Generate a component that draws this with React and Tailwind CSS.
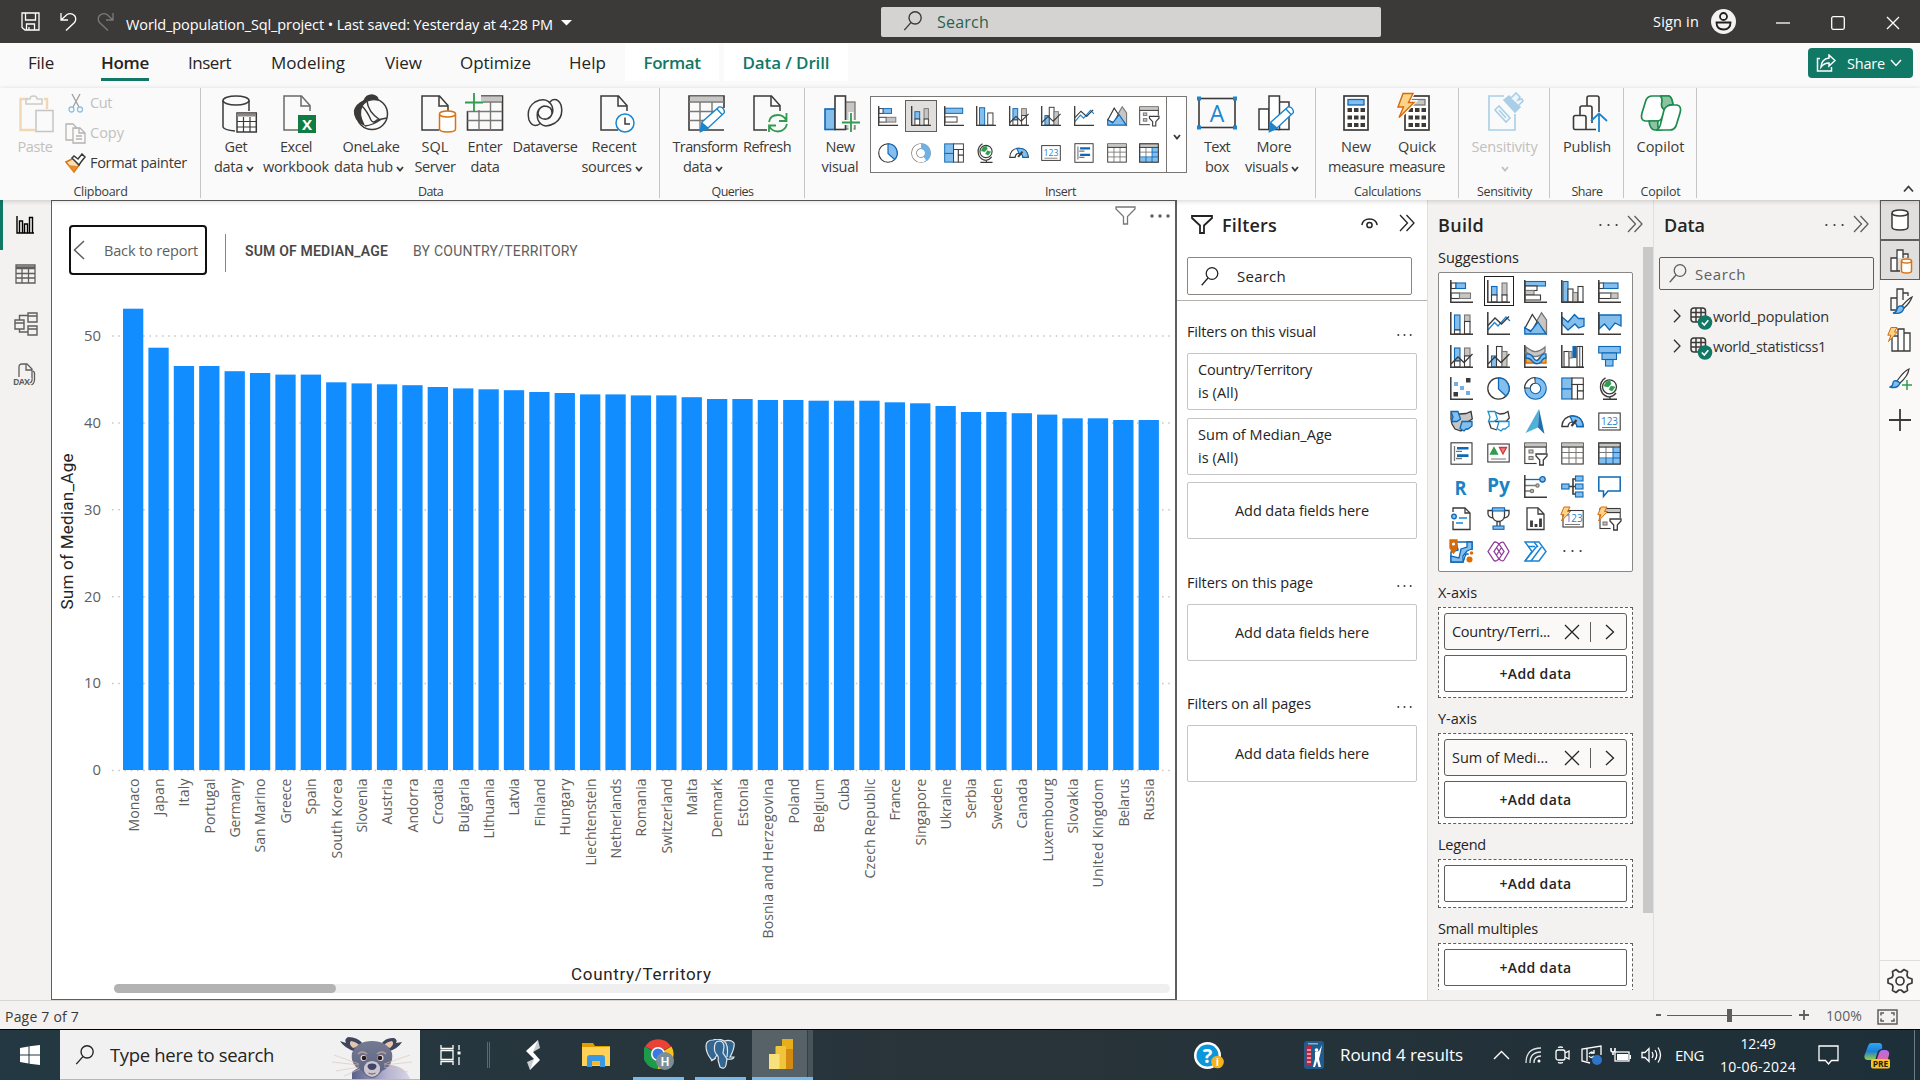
import React, { useLayoutEffect, useRef, useState } from "react";

const DARK = "#3b3a39";
const BLUE = "#83beec";
const BLUE_LINE = "#0f68b5";
const GRAY = "#c8c6c4";
const GRAY_LINE = "#797775";

/* Text run whose letter spacing is adjusted to fill a given width. */
function T({ w, className = "", children }) {
  const ref = useRef(null);
  const [spacing, setSpacing] = useState(null);
  useLayoutEffect(() => {
    const natural = ref.current.getBoundingClientRect().width;
    setSpacing((w - natural) / String(children).length);
  }, []);
  return (
    <span
      ref={ref}
      className={"inline-block shrink-0 whitespace-nowrap " + className}
      style={spacing === null ? undefined : { letterSpacing: spacing + "px" }}
    >
      {children}
    </span>
  );
}

function Svg({ w, h, vb, className = "", children, ...rest }) {
  return (
    <svg
      width={w}
      height={h}
      viewBox={vb || `0 0 ${w} ${h}`}
      fill="none"
      stroke="currentColor"
      strokeWidth="1.3"
      className={"block shrink-0 " + className}
      {...rest}
    >
      {children}
    </svg>
  );
}

const R = ({ b, f, s, sw = 1.1 }) => (
  <rect x={b[0]} y={b[1]} width={b[2] - b[0]} height={b[3] - b[1]} fill={f} stroke={s} strokeWidth={sw} />
);
const Bl = (...b) => <R b={b} f={BLUE} s={BLUE_LINE} />;
const Gr = (...b) => <R b={b} f={GRAY} s={GRAY_LINE} />;
const Wh = (...b) => <R b={b} f="#fff" s={DARK} />;
const Axis = () => <path d="M.8 0V22.2H23" stroke={DARK} strokeWidth="1.5" />;
const Bolt = ({ x = 0, y = 0, k = 1 }) => (
  <path transform={`translate(${x} ${y}) scale(${k})`} d="M4 .5H10L7.5 5H10.5L1.5 14.5L4 8.2H.8Z" fill="#fbd48a" stroke="#d66a0b" strokeWidth="1" />
);
const Funnel = () => <path d="M12 12H23V14L19.3 18V23H15.7V18L12 14Z" fill="#fff" stroke={DARK} strokeWidth="1.3" />;
const Digits = ({ x = 11.5, y = 15, size = 10.5 }) => (
  <text x={x} y={y} textAnchor="middle" fontSize={size} fill="#1a86d0" stroke="none" fontFamily="Open Sans, sans-serif" textLength="17" lengthAdjust="spacingAndGlyphs">123</text>
);

const V = {
  stackedBar: <>{Wh(1, 3, 6, 8.5)}{Bl(6, 3, 15.5, 8.5)}{Wh(1, 13, 9.5, 18.5)}{Gr(9.5, 13, 20.5, 18.5)}<Axis /></>,
  stackedCol: <>{Bl(4.5, 6.5, 10, 15)}{Wh(4.5, 15, 10, 22)}{Gr(15, 3, 20, 15)}{Wh(15, 15, 20, 22)}<Axis /></>,
  bar: <>{Bl(1, 1.5, 21.5, 6)}{Wh(1, 6, 13, 10.5)}{Gr(1, 10.5, 10, 15)}{Wh(1, 15, 16.5, 20)}<Axis /></>,
  barShort: <>{Bl(1, 2.5, 21.5, 8.5)}{Wh(1, 12.5, 15, 18.5)}<Axis /></>,
  col: <>{Bl(2, 1.5, 7, 22)}{Wh(7, 9, 12, 22)}{Gr(12, 12.5, 17, 22)}{Wh(17, 6.5, 22, 22)}<Axis /></>,
  colShort: <>{Bl(4, 2, 10, 22)}{Wh(13.5, 8, 19.5, 22)}<Axis /></>,
  bar100: <>{Wh(1, 3, 5.5, 8.5)}{Bl(5.5, 3, 20, 8.5)}{Wh(1, 13, 13, 18.5)}{Gr(13, 13, 20, 18.5)}<Axis /></>,
  col100: <>{Bl(4.5, 3, 10, 18)}{Wh(4.5, 18, 10, 22)}{Gr(14.5, 3, 20, 9.5)}{Wh(14.5, 9.5, 20, 22)}<Axis /></>,
  line: <><path d="M1 18L7.5 10.5L11 14L19 5L23 9" stroke="#1a86d0" /><path d="M1 13.5L8 6L14.5 12L22 4.5" stroke={DARK} /><Axis /></>,
  area: <><path d="M17.5 .8L12.5 9.5L22.5 22V8Z" fill={GRAY} stroke={GRAY_LINE} /><path d="M.8 16.5L8.3 2.5L13 9.5L8 19Z" fill="#fff" stroke={DARK} /><path d="M.8 15.5L6.5 19.5L14 10L22 22H.8Z" fill={BLUE} stroke={BLUE_LINE} /></>,
  stackedArea: <><path d="M1 5L7 10L13.5 2.5L17.5 6.5H23V14L17.5 16L14 12L7 18L1 12Z" fill={BLUE} stroke={BLUE_LINE} /><Axis /></>,
  area100: <><path d="M1 3H23V14L17 11L11.5 18L6.5 12L1 17Z" fill={BLUE} stroke={BLUE_LINE} /><Axis /></>,
  combo1: <>{Bl(4.5, 3, 10, 16)}{Wh(4.5, 16, 10, 22)}{Gr(14.5, 3, 20, 11)}{Wh(14.5, 11, 20, 22)}<path d="M1 19L8 12L14 17.5L22.5 9" stroke={DARK} /><Axis /></>,
  combo2: <>{Bl(4.5, 11, 10, 22)}{Wh(9.5, 1.5, 15, 22)}{Gr(15, 6.5, 20, 22)}<path d="M1 19L8 12L14 17.5L22.5 9" stroke={DARK} /><Axis /></>,
  ribbon: <><path d="M2 12H8Q11 16 13 16L16 12H22V18H2Z" fill="#f6a44a" stroke="#d66a0b" /><path d="M2 2L5 4Q12 10 21 2V7Q12 15 5 9L2 7Z" fill={GRAY} stroke={GRAY_LINE} /><path d="M2 9Q7 8 9.5 13T16 13Q18 8 22 9V13Q19 13 17 17Q12 21 8 16Q6 13 2 13Z" fill={BLUE} stroke={BLUE_LINE} /><Axis /></>,
  waterfall: <>{Wh(3, 6.5, 8, 22)}{Gr(8, 6.5, 11, 13)}<R b={[12, 1.5, 15, 12.5]} f={BLUE_LINE} s={BLUE_LINE} />{Wh(16, 1.5, 21.5, 22)}<path d="M18.7 2V22" stroke={GRAY_LINE} /><Axis /></>,
  funnel: <>{Bl(.7, 1.5, 22.3, 8)}{Bl(4, 8, 18.5, 14.5)}{Bl(7.5, 14.5, 15, 21)}</>,
  scatter: <><g stroke="none"><path d="M16 1H20.5V5.5H16ZM3.5 15H8V19.5H3.5Z" fill={DARK} /><path d="M4 5H8V9H4ZM10 9H14V13H10ZM16 14H20V18H16Z" fill="#6fb1e4" /></g><Axis /></>,
  pie: <><circle cx="11.5" cy="11.5" r="10.7" fill="#fff" stroke={DARK} /><path d="M11.5 .8A10.7 10.7 0 0 1 19 19L11.5 12Z" fill={BLUE} stroke={BLUE_LINE} /></>,
  donut: <><circle cx="11.5" cy="11.5" r="8" stroke={BLUE_LINE} strokeWidth="6.6" /><circle cx="11.5" cy="11.5" r="8" stroke={BLUE} strokeWidth="4.6" /><path d="M3.2 11.5A8.3 8.3 0 0 1 11.5 3.2" stroke={DARK} strokeWidth="6.6" /><path d="M3.4 10.5A8.3 8.3 0 0 1 10.5 3.4" stroke="#fff" strokeWidth="4.6" /></>,
  donutLight: <><circle cx="11.5" cy="11.5" r="8" stroke={GRAY_LINE} strokeWidth="6.6" /><circle cx="11.5" cy="11.5" r="8" stroke="#fff" strokeWidth="5" /><path d="M11.5 3.5A8 8 0 0 1 16 18" stroke="#6fb1e4" strokeWidth="6.6" /></>,
  treemap: <>{Bl(.8, 1, 11, 12)}{Bl(.8, 12, 11, 22)}{Wh(11, 1, 22.3, 7.5)}{Wh(11, 7.5, 16.5, 22)}{Wh(16.5, 7.5, 22.3, 14)}{Wh(16.5, 14, 22.3, 22)}</>,
  globe: <><circle cx="11.5" cy="9.8" r="7" fill="#fff" stroke={DARK} /><path d="M8 5L12 3.5L13 7L10 10L6 9ZM13 9L17 10L14 14L11 12.5Z" fill="#2f9c4f" stroke="#2f9c4f" strokeWidth=".6" /><path d="M7.5 .8A10.5 10.5 0 0 0 9 19.5Q14 21 18 16M12 19.5V22M5 22.2H19" stroke={DARK} strokeWidth="1.4" /></>,
  filledMap: <><path d="M1 3H7L10 4L16 3.5L21 1.5L22.3 9L19 11L21 15L17 19L14 18L11 21L5 19L2 14L1 9Z" fill={GRAY} stroke={DARK} /><path d="M1 1.5H8L10.5 9L7 11.5H1.5L3 7ZM12 11.5H22V16L18 19H16L14 21L10 18.5Z" fill={BLUE} stroke={BLUE_LINE} /></>,
  shapeMap: <><path d="M9 2.5L13 4L17 3.5L21 1.5L22.3 8L19 11.5L8 11.5" fill="#fff" stroke={DARK} /><path d="M2 12L4 18L10 20" stroke={DARK} /><path d="M1 1.5H8L10.5 9L7 11.5H1.5L3 7ZM12 11.5H22V16L18 19H16L14 21L10 18.5Z" fill="#fff" stroke="#1a93d6" /></>,
  azureMap: <g stroke="none"><path d="M15 -1L1.5 23L14 17.5Z" fill="#50b0d8" /><path d="M15 -1L20.5 24L14 17.5Z" fill="#1f6fae" /></g>,
  gauge: <><path d="M.8 16.5Q1.5 6.5 11.5 6Q21.5 6.5 22.2 16.5H16Q15.5 12 11.5 11.8Q7.5 12 7 16.5Z" fill="#fff" stroke={DARK} /><path d="M9 6.2Q21 4.5 22.2 16.5H16Q15.5 12 11.5 11.8Z" fill={BLUE} stroke={BLUE_LINE} /><path d="M10.5 16L15.5 10" stroke={DARK} strokeWidth="2.2" /></>,
  card: <>{Wh(.8, 3, 22.2, 20)}<Digits /><path d="M4 17.5H19" stroke={GRAY_LINE} strokeWidth="1" /></>,
  multiCard: <>{Wh(1, .8, 22, 22.2)}<path d="M4.5 4V19M6 9.3H12M6 16.5H12" stroke={GRAY_LINE} /><path d="M7 6.3H18.5M7 13.6H18.5" stroke={BLUE_LINE} strokeWidth="2.6" /></>,
  kpi: <>{Wh(.8, 2, 22.2, 20)}<path d="M4 17H19" stroke={GRAY_LINE} strokeWidth="1" /><path d="M3.5 12L7 5.5L10.5 12Z" fill="#2f9c4f" stroke="#2f9c4f" /><path d="M12.5 5.5H19.5L16 12Z" fill="#f08080" stroke="#d13438" /></>,
  slicer: <>{Wh(.8, 1, 22.2, 21.5)}<path d="M1 2.8H22" stroke={GRAY} strokeWidth="2.6" /><path d="M.8 5H22.2" stroke={DARK} />{Gr(5, 8, 9, 11)}{Gr(5, 14.5, 9, 17.5)}<path d="M11 11H24V24H13Z" fill="#fff" stroke="none" /><Funnel /></>,
  table: <>{Wh(.8, 1, 22.2, 22)}<path d="M1 2.8H22" stroke={GRAY} strokeWidth="2.6" /><path d="M8 5V22M15 5V22M1 10.5H22M1 16H22" stroke={GRAY_LINE} strokeWidth="1" /><path d="M.8 5H22.2" stroke={DARK} /></>,
  matrix: <>{Wh(.8, 1, 22.2, 22)}<path d="M15 5.5H22V22H1V16.5H15Z" fill={BLUE} stroke="none" /><path d="M1 2.8H22" stroke={GRAY} strokeWidth="2.6" /><path d="M8 5V16M1 10.5H15" stroke={GRAY_LINE} strokeWidth="1" /><path d="M15 5V22M8 16V22M1 16H22M15 10.5H22" stroke={BLUE_LINE} strokeWidth="1" /><rect x=".8" y="1" width="21.4" height="21" stroke={DARK} strokeWidth="1.1" /><path d="M.8 5H22.2" stroke={DARK} /></>,
  r: <text x="10.5" y="19.5" textAnchor="middle" fontSize="20" fontWeight="700" fill="#1b83c4" stroke="none" textLength="12" lengthAdjust="spacingAndGlyphs" fontFamily="Open Sans, sans-serif">R</text>,
  py: <text x="11.5" y="17" textAnchor="middle" fontSize="20" fontWeight="700" fill="#1b83c4" stroke="none" textLength="23" lengthAdjust="spacingAndGlyphs" fontFamily="Open Sans, sans-serif">Py</text>,
  influencers: <><path d="M1 4.5H16" stroke={BLUE_LINE} /><circle cx="18.5" cy="4.3" r="2.7" fill={BLUE} stroke={BLUE_LINE} /><path d="M1 10.5H12M1 16H7" stroke={GRAY_LINE} /><circle cx="13.5" cy="10.5" r="1.6" fill={GRAY} stroke={GRAY_LINE} /><circle cx="8" cy="16" r="1.6" fill={GRAY} stroke={GRAY_LINE} /><Axis /></>,
  tree: <><path d="M8 11.5H15M16 4H12V19H16" stroke={DARK} strokeWidth="1.6" />{Bl(.7, 9, 8, 14)}{Bl(14.5, 1, 22, 6)}{Bl(14.5, 9, 22, 14)}{Bl(14.5, 17, 22, 22)}</>,
  qa: <path d="M.8 2H22.2V16H10L5.5 21.5V16H.8Z" fill="#fff" stroke={BLUE_LINE} strokeWidth="1.5" />,
  narrative: <><path d="M3 5V1H15L20 6V22.5H3V14" fill="#fff" stroke={DARK} /><path d="M15 1V6H20" stroke={DARK} /><circle cx="4" cy="9.5" r="2.3" fill={BLUE} stroke={BLUE_LINE} /><path d="M9 11H17M6 16H13" stroke="#1a86d0" /></>,
  goals: <><path d="M5.5 2H17.5V9Q17 14 11.5 14.5Q6 14 5.5 9ZM5.5 3.5H1V7Q1.5 10.5 6 11M17.5 3.5H22V7Q21.5 10.5 17 11M10 14.5V19M13 14.5V19" fill="#fff" stroke={DARK} />{Bl(5.5, .8, 17.5, 4)}{Bl(6, 19, 17, 22.3)}</>,
  paginated: <><path d="M3 .8H14L20 7V22.5H3Z" fill="#fff" stroke={DARK} /><path d="M14 1V7H20" stroke={DARK} /><path d="M7.5 20V13.5M12 20V17M16.5 20V11.5" stroke={DARK} strokeWidth="2.8" /></>,
  cardNew: <>{Wh(2, 3.5, 22.2, 20)}<Digits x={13.2} /><path d="M4 17.5H19" stroke={GRAY_LINE} strokeWidth="1" /><Bolt x={-1} y={-.5} /></>,
  slicerNew: <>{Wh(2, 1.5, 22.2, 21.5)}<path d="M4 3.3H22" stroke={GRAY} strokeWidth="2.6" /><path d="M4 5.5H22.2" stroke={DARK} />{Gr(5, 15, 9, 18)}<path d="M11 11H24V24H13Z" fill="#fff" stroke="none" /><Funnel /><Bolt x={-1} y={-.5} /></>,
  arcgis: <><path d="M6 2H22V14H16L13 22H1V12L8 10Z" fill="#fff" stroke={BLUE_LINE} strokeWidth="1.5" /><path d="M1 22V16L9 18L11 9L17 7V2H22V9L17 11L13 16V22Z" fill={BLUE} stroke={BLUE_LINE} /><path d="M0 0H7V8L3.5 13L0 8Z" fill="#d66a0b" stroke="#d66a0b" /><circle cx="3.5" cy="4" r="1.6" fill="#fff" stroke="none" /><circle cx="19.5" cy="19.5" r="4.5" fill="#fff" stroke="none" /><circle cx="19.5" cy="19.5" r="3" fill="#e06c00" stroke="none" /><circle cx="21.500" cy="13" r="3" fill="#fff" stroke="none" /><circle cx="21.500" cy="13" r="1.8" fill="#e06c00" stroke="none" /></>,
  powerApps: <g stroke="#8f3a97" strokeWidth="1.3"><path d="M1 11.5L7 2.500Q8 1.500 10 2.500L12 4L14 2.500Q16 1.500 17 3L22 11.5L17 20Q16 21.500 14 20.500L12 19L10 20.500Q8 21.500 7 20.500Z" fill="#fff" /><path d="M12 4L7 11.500L12 19M12 4L17 11.500L12 19M9.500 7.500L14.500 15M14.500 7.500L9.500 15" /></g>,
  automate: <g stroke="#1683d8" strokeWidth="1.4"><path d="M1 2H15L22 11.5L15 21H1L8 11.5Z" fill="#fff" /><path d="M10 2L14 7M1 21L13 6M7 21L17.500 7M4 6.500L11 6.500" /></g>,
};

const Visual = ({ name, size = 23 }) => (
  <Svg w={size} h={size} vb="0 0 23 23" className="overflow-visible">{V[name]}</Svg>
);

const Dots = ({ w = 19, h = 20, r = 1.1, color = DARK }) => (
  <Svg w={w} h={h} stroke="none">
    <g fill={color}><circle cx={r + .3} cy={h / 2} r={r} /><circle cx={w / 2} cy={h / 2} r={r} /><circle cx={w - r - .3} cy={h / 2} r={r} /></g>
  </Svg>
);
const Magnifier = ({ w = 18, h = 19, className = "" }) => (
  <Svg w={w} h={h} vb="0 0 18 19" className={className}><circle cx="11" cy="6.5" r="5.8" /><path d="M7 11L.7 18.2" /></Svg>
);
const Chevrons = ({ w = 16 }) => <Svg w={w} h="18" vb="0 0 16 18"><path d="M1 1L8.5 9L1 17M7.5 1L15 9L7.5 17" /></Svg>;

/* ---------- Ribbon icons ---------- */
const Page = ({ x = 0 }) => (
  <g transform={`translate(${x} 0)`}><path d="M27 16V10.5L18.5 1H1V35H18" stroke={DARK} strokeWidth="1.5" /><path d="M18 1V11H27" stroke={DARK} strokeWidth="1.5" /></g>
);
const pencil = <><path d="M14 27L31 12Q34 11.5 35.5 14Q37 17 36 18L20 33L12.5 36.5Z" fill="#fff" stroke="#1a86d0" strokeWidth="1.4" /><path d="M12.5 36.5L14 28L20 33ZM29 14L34 19.5" fill="#1a86d0" stroke="#1a86d0" /></>;
const I = {
  paste: <Svg w="36" h="38" className="ml-[3px] opacity-40"><path d="M9 4H1.5V35H16M25 4H28V14" stroke="#e5a54c" strokeWidth="2.4" /><path d="M7 9V4H11Q11 1 14.5 1T18 4H23V9Z" fill="#fafafa" stroke="#8a8886" strokeWidth="1.5" /><rect x="17" y="15.5" width="17" height="21" fill="#fafafa" stroke="#797775" strokeWidth="1.5" /></Svg>,
  getData: <Svg w="36" h="38" className="ml-[7px]"><ellipse cx="14" cy="5.5" rx="13" ry="4.5" stroke={DARK} strokeWidth="1.5" /><path d="M1 5.5V32Q2 35 13 36M27 5.5V16" stroke={DARK} strokeWidth="1.5" /><rect x="15" y="18" width="19.3" height="19" fill="#fff" stroke={DARK} strokeWidth="1.5" /><path d="M15 20H34" stroke="#8a8886" strokeWidth="3" /><path d="M15 26.5H34M15 32H34M21.5 22V37M28 22V37" stroke={DARK} strokeWidth="1.2" /></Svg>,
  excel: <Svg w="34" h="38" className="ml-[7px] overflow-visible"><g opacity=".75"><Page /></g><rect x="15" y="20" width="18" height="18" fill="#107c41" stroke="none" /><text x="24" y="34.5" textAnchor="middle" fontSize="15" fontWeight="700" fill="#fff" stroke="none" fontFamily="Open Sans, sans-serif">X</text></Svg>,
  onelake: <Svg w="36" h="38" className="mt-[-1px]"><circle cx="19" cy="20" r="15.5" stroke={DARK} strokeWidth="1.5" /><path d="M11 7Q13 1 19 1Q25 2 25 6Q14 4 9 12Q5 20 11 31Q1 26 1.5 17Q3 10 11 7Z" fill={DARK} stroke={DARK} /><path d="M9 12Q14 17 18 26Q20 30 24 26L34 24M14 7Q15 18 27 26Q20 31 12 32" stroke={DARK} strokeWidth="1.5" /></Svg>,
  sql: <Svg w="36" h="38" className="ml-[7px]"><Page /><g stroke="#d9730d" strokeWidth="1.5" fill="#fff"><path d="M18.5 19V34Q18.5 37 26.5 37T34.5 34V19" /><ellipse cx="26.5" cy="19" rx="8" ry="3" /></g></Svg>,
  enter: <Svg w="38" h="38" className="overflow-visible"><path d="M15 1H36.5V35H1.5V16" stroke={DARK} strokeWidth="1.6" /><path d="M15 4H36" stroke={GRAY} strokeWidth="5" /><path d="M17 7H36M1.5 16.5H36M1.5 25.5H36M13 15V35M24.5 7V35" stroke={GRAY_LINE} strokeWidth="1.4" /><path d="M8 -2V17M-1 7.5H17" stroke="#2f9c4f" strokeWidth="1.8" /></Svg>,
  dataverse: <Svg w="36" h="38" strokeWidth="1.5" stroke={DARK}><path d="M25 5Q31 3 34 10Q37 22 28 28Q16 35 11 25Q8 14 17 11Q25 11 25 18Q24 24 19 24M11 30Q5 32 2 25Q-1 13 8 7Q20 1 25 11Q28 20 20 24Q12 25 11 18Q12 12 17 11" /><path d="M25 5L22 8M11 30L14 28" /></Svg>,
  recent: <Svg w="36" h="38" className="ml-[7px]"><Page /><circle cx="25" cy="28" r="9" fill="#fff" stroke="#1a86d0" strokeWidth="1.5" /><path d="M25 22.5V29H30" stroke={DARK} strokeWidth="1.5" /></Svg>,
  transform: <Svg w="39" h="38" className="ml-[4px]"><path d="M36 13V1H1V35H36" stroke={DARK} strokeWidth="1.6" /><path d="M2 4H35" stroke={GRAY} strokeWidth="5" /><path d="M1 7H36M1 16.5H30M1 25.5H20M12 7V35M24 7V20" stroke={GRAY_LINE} strokeWidth="1.4" />{pencil}</Svg>,
  refresh: <Svg w="36" h="38" className="ml-[7px]"><path d="M27 16V10.5L18.5 1H1V35H14" stroke={DARK} strokeWidth="1.5" /><path d="M18 1V11H27" stroke={DARK} strokeWidth="1.5" /><g stroke="#2f9c4f" strokeWidth="1.8"><path d="M16 27Q17 20 25 20Q31 20 33.5 26M33.5 18V26H26M34 29Q32 36 25 36.5Q18 36 16.5 31M16 37V30.5H23" /></g></Svg>,
  newVisual: <Svg w="38" h="38" className="ml-[3px]"><rect x="2" y="14" width="10" height="20.5" fill={BLUE} stroke={BLUE_LINE} strokeWidth="1.6" /><rect x="22" y="7" width="10" height="27" fill={GRAY} stroke={GRAY_LINE} /><rect x="12" y="1" width="10.5" height="33.5" fill="#fff" stroke={DARK} strokeWidth="1.6" /><path d="M28 17V37M18 27.5H37" stroke="#fafafa" strokeWidth="5" /><path d="M28 18V37M19 27.5H37" stroke="#2f9c4f" strokeWidth="1.8" /></Svg>,
  textBox: <Svg w="40" h="38"><rect x="2" y="3.5" width="36" height="29" stroke={DARK} strokeWidth="1.6" /><g fill="#1a86d0" stroke="none"><path d="M0 1.5H4V5.5H0ZM36 1.5H40V5.5H36ZM0 30.5H4V34.5H0ZM36 30.5H40V34.5H36Z" /></g><text x="20" y="26.5" textAnchor="middle" fontSize="23" fill="#1a86d0" stroke="none" fontFamily="Open Sans, sans-serif">A</text></Svg>,
  moreVisuals: <Svg w="38" h="38" className="ml-[3px]"><g stroke={DARK} strokeWidth="1.5" fill="#fff"><rect x="2" y="14" width="10" height="20.5" /><rect x="22" y="7" width="10" height="27.5" /><rect x="12" y="1" width="10.5" height="33.5" /></g>{pencil}</Svg>,
  calc: <Svg w="26" h="38"><rect x="1" y="1" width="24" height="34" fill="#fff" stroke={DARK} strokeWidth="1.7" /><rect x="5" y="4.5" width="16" height="5.5" fill={BLUE} stroke={BLUE_LINE} /><path d="M4.5 15H22M4.5 22.5H22M4.5 30H22" stroke={DARK} strokeWidth="4" strokeDasharray="4.5 2" /></Svg>,
  quick: <Svg w="34" h="38" className="-ml-[6px] overflow-visible"><rect x="8" y="1" width="24" height="34" fill="#fff" stroke={DARK} strokeWidth="1.7" /><rect x="12" y="4.5" width="16" height="5.5" fill={GRAY} stroke={GRAY_LINE} /><path d="M11.5 15H29M11.5 22.5H29M11.5 30H29" stroke={DARK} strokeWidth="4" strokeDasharray="4.5 2" /><path d="M5 -2H16L11 7H17L2 23L6 11H0Z" fill="#fbd48a" stroke="#fafafa" strokeWidth="4" /><path d="M6 -1.5H16L11.5 7.5H17L2 22.5L6.5 12H1Z" fill="#fbd48a" stroke="#d66a0b" strokeWidth="1.4" /></Svg>,
  sensitivity: <Svg w="38" h="38" className="ml-[2px] overflow-visible" stroke="#a9cfe8" strokeWidth="1.6"><path d="M17 1H2V35H28V19" /><path d="M8 15L12 11L23 23L19 27Z M12 15L19 23" /><path d="M17 5L22 1L33 12L28 17Z" fill="#a9cfe8" /><path d="M24 3L29 -2L33 2L31 5L35 4L36 6L32 10" fill="#eef6fb" /></Svg>,
  publish: <Svg w="36" h="38" className="ml-[5px]" stroke={DARK} strokeWidth="1.6"><path d="M15 11V3Q15 1 17 1H25Q27 1 27 3V17M8 20V13Q8 11 10 11H18Q20 11 20 13V28M15 34.5H3Q1.5 34.5 1.5 32.5V22.5Q1.5 20.5 3.5 20.5H12Q14 20.5 14 22.5V34.5M15 34.5H24" /><path d="M27 37V19M19 26L27 18.5L35 26" stroke="#1a86d0" strokeWidth="1.8" /></Svg>,
  copilot: <Svg w="42" h="38" stroke="#1d8a4e" strokeWidth="1.7"><path d="M20 1H29Q32 2 33 10Q27 9 25 15Q22 26 18 26H5Q0 25 2 18L6 5Q8 1 12 1Z" fill="#fff" /><path d="M20 1H29Q32 2 33 10Q27 9 25 15Q20 13 22 6Q22 2 20 1Z" fill="#8cc4a2" /><path d="M18 26H9Q10 35 15 35H20Q17 33 18 26Z" fill="#8cc4a2" /><path d="M33 10H37Q42 11 40 18L36 31Q34 35 30 35H16Q20 34 21 27L24 15Q26 10 33 10Z" fill="#fff" /></Svg>,
};

const Caret = ({ className = "" }) => <Svg w="8" h="6" strokeWidth="1.8" className={className}><path d="M1 1L4 4.5L7 1" /></Svg>;

function Item({ icon, w, lines, width, caret, muted }) {
  return (
    <div className={(muted ? "text-[#c2c0be] " : "text-[#3b3a39] ") + width + " flex shrink-0 flex-col items-center pt-[7px] text-[14.5px] leading-[20px]"}>
      <div className="h-[38px]">{icon}</div>
      <div className="mt-[4px] flex flex-col items-center">
        {lines.map((l, i) => {
          const withCaret = caret && i === lines.length - 1;
          return (
            <div key={l} className={(withCaret && l ? "-ml-[4px] " : "") + "flex h-[20px] shrink-0 items-center gap-[3px]"}>
              {l && <T w={w[i]}>{l}</T>}
              {withCaret && <Caret className="mt-[3px]" />}
            </div>
          );
        })}
      </div>
    </div>
  );
}

function Group({ label, lw, width, children, pad = "" }) {
  return (
    <div className={width + " relative flex h-[112px] shrink-0 flex-col"}>
      <div className={"flex h-[94px] " + pad}>{children}</div>
      <div className="flex justify-center pt-px text-[12.5px] leading-[17px] text-[#3b3a39]"><T w={lw}>{label}</T></div>
      <div className="absolute right-0 top-0 h-[110px] w-px bg-[#c8c6c4]" />
    </div>
  );
}

const gallery = [
  ["stackedBar", "stackedCol", "barShort", "colShort", "combo1", "combo2", "line", "area", "slicer"],
  ["pie", "donutLight", "treemap", "globe", "gauge", "card", "multiCard", "table", "matrix"],
];

function Ribbon() {
  return (
    <div className="relative z-10 flex h-[112px] bg-[#fafafa] shadow-[0_1px_5px_rgba(0,0,0,0.18)]">
      <Group label="Clipboard" lw={54} width="w-[201px]" pad="pl-[16px]">
        <Item icon={I.paste} w={[35]} lines={["Paste"]} width="w-[38px]" muted />
        <div className="ml-[13px] flex flex-col text-[14.5px]">
          <div className="flex h-[30px] items-center text-[#c2c0be]">
            <Svg w="16" h="20" className="ml-[1px] mr-[6px]"><path d="M4 1L11 14M12 1L5 14" stroke="#a19f9d" /><circle cx="3.5" cy="16.5" r="2.5" stroke="#8cc0e3" /><circle cx="12" cy="16.5" r="2.5" stroke="#8cc0e3" /></Svg>
            <T w={22}>Cut</T>
          </div>
          <div className="flex h-[30px] items-center text-[#c2c0be]">
            <Svg w="21" h="21" className="mr-[4px] -ml-[2px]" stroke="#b5b3b1"><path d="M8 17H1V1H8L11 4V6M8 5H15L20 10V20H8ZM14 5V10H20M11 13H17M11 16H17" /></Svg>
            <T w={34}>Copy</T>
          </div>
          <div className="flex h-[30px] items-center text-[#3b3a39]">
            <Svg w="21" h="21" className="mr-[4px] -ml-[2px]"><path d="M1 9L9 5L14 12L9 19Z" fill="#fbe0b8" stroke="#d9730d" strokeWidth="1.6" /><path d="M3 12L12 13L9 19Z" fill="#e88b2d" stroke="none" /><path d="M7 5L14 12L16 9L20 4L17 1L13 6L9 3Z" fill="#fff" stroke={DARK} strokeWidth="1.5" /></Svg>
            <T w={97}>Format painter</T>
          </div>
        </div>
      </Group>
      <Group label="Data" lw={25} width="w-[459px]" pad="pl-[5px]">
        <Item icon={I.getData} w={[23, 29]} lines={["Get", "data"]} caret width="w-[60px]" />
        <Item icon={I.excel} w={[32, 66]} lines={["Excel", "workbook"]} width="w-[60px]" />
        <Item icon={I.onelake} w={[57, 59]} lines={["OneLake", "data hub"]} caret width="w-[90px]" />
        <Item icon={I.sql} w={[27, 41]} lines={["SQL", "Server"]} width="w-[38px]" />
        <Item icon={I.enter} w={[35, 29]} lines={["Enter", "data"]} width="w-[62px]" />
        <Item icon={I.dataverse} w={[65]} lines={["Dataverse"]} width="w-[58px]" />
        <Item icon={I.recent} w={[45, 50]} lines={["Recent", "sources"]} caret width="w-[80px]" />
      </Group>
      <Group label="Queries" lw={42} width="w-[145px]" pad="pl-[7px]">
        <Item icon={I.transform} w={[65, 29]} lines={["Transform", "data"]} caret width="w-[76px]" />
        <Item icon={I.refresh} w={[48]} lines={["Refresh"]} width="w-[48px]" />
      </Group>
      <Group label="Insert" lw={31} width="w-[511px]" pad="pl-[5px]">
        <Item icon={I.newVisual} w={[29, 37]} lines={["New", "visual"]} width="w-[60px]" />
        <div className="mt-[8px] flex h-[77px] w-[317px] shrink-0 border border-[#797775] bg-white">
          <div className="grid flex-1 grid-cols-[32px_33px_33px_32px_33px_32px_33px_33px_32px] grid-rows-[37px_37px] pl-px">
            {gallery.flat().map((n, i) => (
              <div key={n} className="flex items-center justify-center">
                <div className={i === 1 ? "flex h-[32px] w-[32px] shrink-0 items-center justify-center border border-[#605e5c] bg-[#e1dfdd]" : "flex"}>
                  <Visual name={n} size={20} />
                </div>
              </div>
            ))}
          </div>
          <div className="flex w-[20px] items-center justify-center border-l border-[#797775] text-[#3b3a39]"><Caret className="mt-[5px]" /></div>
        </div>
        <Item icon={I.textBox} w={[26, 24]} lines={["Text", "box"]} width="w-[60px]" />
        <Item icon={I.moreVisuals} w={[35, 43]} lines={["More", "visuals"]} caret width="w-[54px]" />
      </Group>
      <Group label="Calculations" lw={67} width="w-[143px]" pad="gap-px pl-[10px]">
        <Item icon={I.calc} w={[30, 56]} lines={["New", "measure"]} width="w-[60px]" />
        <Item icon={I.quick} w={[38, 56]} lines={["Quick", "measure"]} width="w-[60px]" />
      </Group>
      <Group label="Sensitivity" lw={55} width="w-[91px]" pad="justify-center">
        <Item icon={I.sensitivity} w={[66]} lines={["Sensitivity", ""]} caret muted width="w-[70px]" />
      </Group>
      <Group label="Share" lw={31} width="w-[74px]" pad="justify-center">
        <Item icon={I.publish} w={[48]} lines={["Publish"]} width="w-[60px]" />
      </Group>
      <Group label="Copilot" lw={40} width="w-[73px]" pad="justify-center">
        <Item icon={I.copilot} w={[48]} lines={["Copilot"]} width="w-[60px]" />
      </Group>
      <div className="ml-auto mr-[6px] mt-[97px] text-[#3b3a39]"><Svg w="11" h="8" strokeWidth="1.8"><path d="M1 6.5L5.5 1.5L10 6.5" /></Svg></div>
    </div>
  );
}

function TitleBar() {
  return (
    <div className="flex h-[43px] shrink-0 items-center bg-[#3b3a39] text-white">
      <Svg w="19" h="19" className="ml-[21px]"><path d="M1 1H18V18H4L1 15.5ZM4.5 1V8H14.5V1M5.5 18V12H13.5V18M8 15V18" /></Svg>
      <Svg w="17" h="19" className="ml-[20px]"><path d="M1 1V8H8M1 8L7 2.5Q11 .5 14.5 3.5Q17 7 14.5 10.5L6 18.5" /></Svg>
      <Svg w="17" h="19" className="ml-[20px] text-[#7c7a78]"><path d="M16 1V8H9M16 8L10 2.5Q6 .5 2.5 3.5Q0 7 2.5 10.5L11 18.5" /></Svg>
      <T w={427} className="ml-[12px] mt-[6px] text-[14.5px] leading-[20px]">World_population_Sql_project • Last saved: Yesterday at 4:28 PM</T>
      <Svg w="11" h="6" className="ml-[8px] mt-[2px]" stroke="none"><path d="M0 0H11L5.5 5.5Z" fill="#fff" /></Svg>
      <div className="ml-[309px] flex h-[30px] w-[500px] items-center rounded-[2px] bg-[#d4d3d1] text-[#3b3a39]">
        <Magnifier w={20} h={20} className="-mt-px ml-[22px]" />
        <T w={52} className="ml-[14px] text-[16px] text-[#28624f]">Search</T>
      </div>
      <T w={46} className="ml-[272px] text-[14.5px]">Sign in</T>
      <Svg w="25" h="25" className="ml-[12px]"><circle cx="12.5" cy="12.5" r="12.5" fill="#f3f2f1" stroke="none" /><circle cx="12.5" cy="7.5" r="3.5" stroke="#201f1e" strokeWidth="1.8" /><path d="M5.5 13.5H19.5Q19.5 20.5 12.5 20.5T5.5 13.5Z" stroke="#201f1e" strokeWidth="1.8" /></Svg>
      <Svg w="14" h="14" className="ml-[40px] mt-[2px]"><path d="M0 7H14" /></Svg>
      <Svg w="14" h="14" className="ml-[41px] mt-[3px]"><rect x=".7" y=".7" width="12.6" height="12.6" rx="1.5" /></Svg>
      <Svg w="14" h="14" className="ml-[41px] mt-[3px]"><path d="M1 1L13 13M13 1L1 13" /></Svg>
    </div>
  );
}

function Tabs() {
  return (
    <div className="flex h-[45px] shrink-0 bg-[#fafafa] text-[17px] leading-[39px] text-[#252423]">
      <T w={26} className="ml-[28px]">File</T>
      <div className="ml-[47px] h-[38px] w-[48px] border-b-[3px] border-[#117865]"><T w={48} className="font-semibold">Home</T></div>
      <T w={43} className="ml-[39px]">Insert</T>
      <T w={74} className="ml-[40px]">Modeling</T>
      <T w={37} className="ml-[40px]">View</T>
      <T w={71} className="ml-[38px]">Optimize</T>
      <T w={37} className="ml-[38px]">Help</T>
      <div className="ml-[19px] flex h-[38px] w-[94px] justify-center bg-white font-semibold text-[#117865]"><T w={57}>Format</T></div>
      <div className="ml-[5px] flex h-[38px] w-[124px] justify-center bg-white font-semibold text-[#117865]"><T w={87}>Data / Drill</T></div>
      <div className="ml-auto mr-[7px] mt-[5px] flex h-[30px] w-[105px] items-center rounded-[4px] bg-[#117865] text-white">
        <Svg w="20" h="18" className="ml-[8px]" strokeWidth="1.5"><path d="M4 4.5H1.5V17H15.5V13M13 1L19 6.5L13 12V9Q8 9 5 13Q5.5 5 13 4Z" /></Svg>
        <T w={38} className="ml-[11px] text-[14.5px]">Share</T>
        <Svg w="12" h="8" className="ml-[5px]" strokeWidth="1.5"><path d="M1 1L6 6.5L11 1" /></Svg>
      </div>
    </div>
  );
}

/* ---------- Report canvas ---------- */
// [country, y of the bar's top edge, label length]
const bars = [
  ["Monaco", 308.7, 53], ["Japan", 347.7, 37], ["Italy", 366, 28], ["Portugal", 366, 55], ["Germany", 371.2, 59],
  ["San Marino", 373, 74], ["Greece", 374.6, 45], ["Spain", 374.6, 36], ["South Korea", 382.3, 80], ["Slovenia", 383.4, 54],
  ["Austria", 384.3, 46], ["Andorra", 385.2, 54], ["Croatia", 387, 46], ["Bulgaria", 388.4, 54], ["Lithuania", 389.3, 60],
  ["Latvia", 390.2, 37], ["Finland", 392, 48], ["Hungary", 393, 57], ["Liechtenstein", 394.4, 87], ["Netherlands", 394.4, 80],
  ["Romania", 395.4, 58], ["Switzerland", 395.4, 75], ["Malta", 397.2, 37], ["Denmark", 399, 59], ["Estonia", 399, 48],
  ["Bosnia and Herzegovina", 400, 160], ["Poland", 400, 45], ["Belgium", 400.7, 54], ["Cuba", 400.7, 32], ["Czech Republic", 400.7, 100],
  ["France", 402.3, 42], ["Singapore", 403.3, 67], ["Ukraine", 406, 51], ["Serbia", 412, 40], ["Sweden", 412, 51],
  ["Canada", 413.2, 50], ["Luxembourg", 414.6, 83], ["Slovakia", 418.3, 55], ["United Kingdom", 418.3, 109], ["Belarus", 420, 48], ["Russia", 420, 42],
];

function Chart() {
  return (
    <svg width="1123" height="708" viewBox="52 276 1123 708" className="block" fontFamily="Open Sans, sans-serif">
      {[50, 40, 30, 20, 10, 0].map((v, i) => (
        <g key={v}>
          <path d={`M112 ${336 + i * 86.9}H1170`} stroke="#c8c6c4" strokeWidth="1.5" strokeDasharray="1.5 4.75" />
          <text x="101" y={340.8 + i * 86.9} textAnchor="end" fontSize="14" fill="#605e5c" textLength={v ? 17 : 8.5} lengthAdjust="spacingAndGlyphs">{v}</text>
        </g>
      ))}
      {bars.map(([name, top, len], i) => (
        <g key={name}>
          <rect x={123 + i * 25.39} y={top} width="20.3" height={770 - top} fill="#118dff" />
          <text transform={`translate(${138.5 + i * 25.39} 778.5) rotate(-90)`} textAnchor="end" fontSize="14" fill="#605e5c" textLength={len}>{name}</text>
        </g>
      ))}
      <text transform="translate(73 531.5) rotate(-90)" textAnchor="middle" fontFamily="Roboto, sans-serif" fontSize="17" fill="#252423" textLength="156">Sum of Median_Age</text>
      <text x="641" y="979.5" textAnchor="middle" fontFamily="Roboto, sans-serif" fontSize="17" fill="#252423" textLength="140">Country/Territory</text>
    </svg>
  );
}

function Canvas() {
  return (
    <div className="w-[1126px] shrink-0 border border-r-2 border-[#605e5c] bg-white">
      <div className="flex h-[75px]">
        <div className="ml-[17px] mt-[24px] flex h-[50px] w-[138px] items-center rounded-[4px] border-2 border-[#111] text-[#605e5c]">
          <Svg w="12" h="20" className="ml-[2px]" strokeWidth="1.5"><path d="M11 1L1.5 10L11 19" /></Svg>
          <T w={94} className="ml-[19px] mt-px text-[14.5px]">Back to report</T>
        </div>
        <div className="ml-[18px] mt-[33px] h-[38px] w-px bg-[#8a8886]" />
        <div className="ml-[19px] mt-[40px] flex font-['Roboto'] text-[14px] leading-[20px]">
          <T w={143} className="font-semibold text-[#4a4846]">SUM OF MEDIAN_AGE</T>
          <T w={165} className="ml-[25px] text-[#605e5c]">BY COUNTRY/TERRITORY</T>
        </div>
        <div className="ml-auto mr-[5px] flex pt-[5px] text-[#797775]">
          <Svg w="21" h="19"><path d="M1 1H20V3L12.5 10.5V18H8.5V10.5L1 3Z" /></Svg>
          <div className="ml-[14px]"><Dots w={20} h={20} r={1.7} color="#605e5c" /></div>
        </div>
      </div>
      <Chart />
      <div className="ml-[62px] h-[9px] w-[1056px] rounded-full bg-[#efefef]"><div className="h-[9px] w-[222px] rounded-full bg-[#b3b3b3]" /></div>
    </div>
  );
}

function Nav() {
  return (
    <div className="flex w-[51px] shrink-0 flex-col items-center bg-[#f3f2f1] text-[#605e5c]">
      <div className="flex h-[50px] w-full items-center border-l-[3px] border-[#117865] text-black">
        <Svg w="18" h="18" className="ml-[13px]" strokeWidth="1.4"><path d="M1 0V17H18M3.5 17V5H6.5V17M8.5 17V8H11.5V17M13.5 17V1.5H16.5V17" /></Svg>
      </div>
      <Svg w="21" h="20" className="mt-[14px]"><path d="M1 1H20V19H1ZM1 4.5H20M1 9.5H20M1 14H20M7 4.5V19M13.5 4.5V19M1 3H20" /></Svg>
      <Svg w="24" h="24" className="mt-[28px]" strokeWidth="1.4"><path d="M1 8H10V17H1ZM1 11H10M14 1H23V10H14ZM14 4H23M14 14H23V23H14ZM14 17H23M5.5 8V3.5H14M5.5 17V20H14" /></Svg>
      <Svg w="24" h="24" className="mt-[27px] ml-[-2px]"><path d="M6 14V4Q6 1 9 1H14L19 6V17Q19 20 15 20M13 1V7H19M20 8Q22 9 21.5 12V17Q21 22 17 22" /><text x="0" y="21.5" fontSize="9" fontWeight="700" fill="currentColor" stroke="#f3f2f1" strokeWidth="2" paintOrder="stroke" textLength="17" fontFamily="Open Sans, sans-serif">DAX</text></Svg>
    </div>
  );
}

/* ---------- Panes ---------- */
const Card = ({ children }) => <div className="flex h-[57px] w-[230px] flex-col justify-center rounded-[2px] border border-[#c8c6c4] bg-white">{children}</div>;
const Drop = () => <Card><div className="flex justify-center pt-px"><T w={134}>Add data fields here</T></div></Card>;
const Section = ({ w, children, gap }) => (
  <div className={"flex h-[22px] w-[225px] items-center justify-between " + gap}><T w={w}>{children}</T><div className="pt-[6px]"><Dots w={15} h={16} r={1} /></div></div>
);

function Filters() {
  return (
    <div className="w-[250px] shrink-0 bg-white text-[14.5px] text-[#252423]">
      <div className="flex h-[50px] items-center pl-[14px]">
        <Svg w="22" h="19" strokeWidth="1.8" className="-mt-px"><path d="M1 1H21V3L13 10.5V18H9V10.5L1 3Z" /></Svg>
        <T w={55} className="ml-[9px] text-[18px] font-semibold">Filters</T>
        <Svg w="17" h="12" className="-mt-[3px] ml-[84px]" strokeWidth="1.5"><path d="M.8 7Q2 1 8.5 1T16.2 7" /><circle cx="8.5" cy="7" r="2.6" /></Svg>
        <div className="ml-[21px] mt-[-4px]"><Chevrons /></div>
      </div>
      <div className="ml-[10px] mt-[7px] flex h-[38px] w-[225px] items-center rounded-[2px] border border-[#8a8886]">
        <Magnifier className="ml-[13px]" /><T w={49} className="ml-[18px] text-[15px]">Search</T>
      </div>
      <div className="mt-[5px] h-px bg-[#b3b0ad]" />
      <div className="pl-[10px]">
        <Section w={129} gap="mt-[20px] mb-[10px]">Filters on this visual</Section>
        <Card><div className="flex flex-col pb-[2px] pl-[10px] leading-[23px]"><T w={114} className="self-start">Country/Territory</T><T w={40} className="self-start">is (All)</T></div></Card>
        <div className="h-[8px]" />
        <Card><div className="flex flex-col pb-[2px] pl-[10px] leading-[23px]"><T w={134} className="self-start">Sum of Median_Age</T><T w={40} className="self-start">is (All)</T></div></Card>
        <div className="h-[7px]" />
        <Drop />
        <Section w={126} gap="mt-[33px] mb-[10px]">Filters on this page</Section>
        <Drop />
        <Section w={124} gap="mt-[32px] mb-[10px]">Filters on all pages</Section>
        <Drop />
      </div>
    </div>
  );
}

const buildVisuals = [
  "stackedBar", "stackedCol", "bar", "col", "bar100", "col100", "line", "area", "stackedArea", "area100",
  "combo1", "combo2", "ribbon", "waterfall", "funnel", "scatter", "pie", "donut", "treemap", "globe",
  "filledMap", "shapeMap", "azureMap", "gauge", "card", "multiCard", "kpi", "slicer", "table", "matrix",
  "r", "py", "influencers", "tree", "qa", "narrative", "goals", "paginated", "cardNew", "slicerNew",
  "arcgis", "powerApps", "automate",
];

const AddData = () => <div className="flex h-[37px] shrink-0 items-center justify-center rounded-[2px] border border-[#605e5c] bg-white text-[14px] font-semibold"><T w={72}>+Add data</T></div>;

function Well({ label, lw, field, fw }) {
  return (
    <>
      <div className="flex h-[35px] shrink-0 items-center pt-[6px]"><T w={lw}>{label}</T></div>
      <div className="flex w-[195px] shrink-0 flex-col gap-[5px] border border-dashed border-[#605e5c] bg-white p-[5px]">
        {field && (
          <div className="flex h-[37px] items-center rounded-[3px] border border-[#605e5c] bg-[#faf9f8] pl-[7px]">
            <T w={fw}>{field}</T>
            <div className="ml-auto flex items-center pr-[11px]">
              <Svg w="16" h="16"><path d="M1 1L15 15M15 1L1 15" /></Svg>
              <div className="ml-[10px] h-[20px] w-px bg-[#605e5c]" />
              <Svg w="10" h="16" className="ml-[14px]"><path d="M1 1L8.5 8L1 15" /></Svg>
            </div>
          </div>
        )}
        <AddData />
      </div>
    </>
  );
}

const PaneHead = ({ title, w, gap }) => (
  <div className="flex h-[46px] items-center pt-[3px]">
    <T w={w} className="mt-[2px] text-[18px] font-semibold">{title}</T>
    <div className={gap}><Dots w={19} /></div>
    <div className="ml-[9px] mt-[-2px] text-[#605e5c]"><Chevrons /></div>
  </div>
);

function Build() {
  return (
    <div className="flex w-[226px] shrink-0 flex-col border-l border-[#e1dfdd] bg-[#f3f2f1] text-[14.5px] text-[#252423]">
      <div className="pl-[10px]"><PaneHead title="Build" w={46} gap="ml-[115px]" /></div>
      <div className="flex h-[744px] justify-between overflow-hidden">
        <div className="flex flex-col pl-[10px]">
          <div className="flex h-[26px] shrink-0 items-center pb-[3px]"><T w={81}>Suggestions</T></div>
          <div className="grid h-[300px] w-[195px] shrink-0 auto-rows-[32.5px] grid-cols-5 rounded-[2px] border border-[#8a8886] bg-white px-[4px] pt-[2px]">
            {buildVisuals.map((n, i) => (
              <div key={n} className="flex items-center justify-center">
                <div className={i === 1 ? "flex h-[30px] w-[30px] shrink-0 items-center justify-center border border-[#201f1e]" : "flex"}><Visual name={n} /></div>
              </div>
            ))}
            <div className="flex items-center justify-center"><Dots w={19} /></div>
          </div>
          <Well label="X-axis" lw={39} field="Country/Terri..." fw={98} />
          <Well label="Y-axis" lw={39} field="Sum of Medi..." fw={96} />
          <Well label="Legend" lw={48} />
          <Well label="Small multiples" lw={100} />
        </div>
        <div className="mt-[1px] h-[666px] w-[10px] bg-[#c8c8c8]" />
      </div>
    </div>
  );
}

const TableRow = ({ name, w }) => (
  <div className="flex h-[30px] items-center pl-[19px]">
    <Svg w="8" h="14"><path d="M1 .7L7 7L1 13.3" /></Svg>
    <Svg w="25" h="24" className="ml-[9px] mt-[6px]" strokeWidth="1.5"><rect x="1" y="1" width="14.5" height="14" rx="3" stroke={DARK} /><path d="M6 1V15M11 1V15M1 5.5H15.5M1 10H15.5" stroke={DARK} /><circle cx="15" cy="15.5" r="7.3" fill="#117865" stroke="none" /><path d="M11.8 15.5L14.3 18L18.3 13.3" stroke="#fff" strokeWidth="1.6" /></Svg>
    <T w={w} className="-ml-[2px] mt-px">{name}</T>
  </div>
);

function Data() {
  return (
    <div className="w-[226px] shrink-0 border-l border-[#e1dfdd] bg-[#f3f2f1] text-[14.5px] text-[#323130]">
      <div className="pl-[10px] text-[#252423]"><PaneHead title="Data" w={41} gap="ml-[120px]" /></div>
      <div className="ml-[5px] mt-[11px] flex h-[33px] w-[215px] items-center rounded-[2px] border border-[#605e5c] text-[#605e5c]">
        <Magnifier className="ml-[9px]" /><T w={51} className="ml-[8px] mt-px text-[15px]">Search</T>
      </div>
      <div className="mt-[11px] flex flex-col">
        <TableRow name="world_population" w={116} />
        <TableRow name="world_statisticss1" w={113} />
      </div>
    </div>
  );
}

function Rail() {
  return (
    <div className="flex w-[41px] shrink-0 flex-col items-center border-l border-[#e1dfdd] bg-[#faf9f8] text-[#3b3a39]">
      <div className="flex h-[40px] w-[40px] items-center justify-center border border-[#605e5c] bg-[#e1dfdd]">
        <Svg w="18" h="22" strokeWidth="1.5"><path d="M1 4V18Q1 21 9 21T17 18V4" fill="#fff" /><ellipse cx="9" cy="4" rx="8" ry="3" fill="#fff" /></Svg>
      </div>
      <div className="flex h-[40px] w-[40px] items-center justify-center border border-[#605e5c] bg-[#e1dfdd]">
        <Svg w="24" h="26" className="ml-[4px] mt-px overflow-visible"><path d="M10 23H1V10H7V23M7 10V2H13V10M13 6H18V10" fill="#fff" stroke={DARK} /><g stroke="#d9730d" fill="#fff" strokeWidth="1.5"><path d="M11.5 13V23Q11.5 25 16.5 25T21.5 23V13" /><ellipse cx="16.5" cy="13" rx="5" ry="2" /></g></Svg>
      </div>
      <Svg w="24" h="27" className="ml-[3px] mt-[8px]"><path d="M10 22H1V10H7V22M7 10V1H13V12M13 5H18V8" stroke={DARK} /><g stroke={DARK} fill="#fff"><path d="M22 9Q18 11 12 18L14 20Q20 15 22 9Z" /><path d="M12 18Q8 17 7 21Q7 24 3 25Q12 27 14 20Z" fill={BLUE} stroke={BLUE_LINE} /></g></Svg>
      <Svg w="24" h="26" className="mt-[11px] overflow-visible"><g transform="translate(3 0)"><path d="M1 10H7V25H1ZM7 3H13V25H7ZM13 7H19V25H13Z" fill="#fff" stroke={DARK} /></g><Bolt x={-1} y={1} /></Svg>
      <Svg w="24" h="26" className="ml-[2px] mt-[16px]"><path d="M20 1Q15 3 8 13L11 15Q19 8 20 1Z" fill="#fff" stroke={DARK} /><path d="M8 13Q4 12 4 15Q4 18 1 19Q9 21 11 15Z" fill={BLUE} stroke={BLUE_LINE} /><path d="M18 12V22M13 17H23" stroke="#2f9c4f" strokeWidth="1.5" /></Svg>
      <Svg w="22" h="22" className="mt-[15px]" strokeWidth="1.8"><path d="M11 0V22M0 11H22" /></Svg>
      <div className="mt-auto flex h-[40px] w-full items-center justify-center border-t border-[#e1dfdd]">
        <Svg w="26" h="26" vb="0 0 26 26" strokeWidth="1.7"><path d="M9 1.5L12 4H14L17 1.5L20.5 3.5L20 7.5L21 9.5L25 11V15L21 16.5L20 18.5L20.5 22.5L17 24.5L14 22H12L9 24.5L5.5 22.5L6 18.5L5 16.5L1 15V11L5 9.5L6 7.5L5.5 3.5Z" strokeLinejoin="round" /><circle cx="13" cy="13" r="4" /></Svg>
      </div>
    </div>
  );
}

function StatusBar() {
  return (
    <div className="flex h-[29px] shrink-0 items-center border-t border-[#d8d6d4] bg-[#f3f2f1] text-[14px] text-[#3b3a39]">
      <T w={74} className="ml-[5px] mt-[3px]">Page 7 of 7</T>
      <div className="ml-auto mr-[22px] flex items-center text-[#605e5c]">
        <div className="h-[2px] w-[5px] bg-[#605e5c]" />
        <div className="ml-[6px] flex h-[13px] w-[125px] items-center">
          <div className="h-px w-[60px] bg-[#605e5c]" /><div className="h-[13px] w-[5px] bg-[#605e5c]" /><div className="h-px w-[60px] bg-[#605e5c]" />
        </div>
        <Svg w="10" h="10" className="ml-[7px]" strokeWidth="1.8"><path d="M5 0V10M0 5H10" /></Svg>
        <T w={36} className="ml-[17px]">100%</T>
        <Svg w="21" h="16" className="ml-[15px] mt-[3px]" strokeWidth="1.5"><rect x="1" y="1" width="19" height="14" /><path d="M4 6.500V4H7M14 4H17V6.500M17 9.500V12H14M7 12H4V9.500" /></Svg>
      </div>
    </div>
  );
}

/* ---------- Windows taskbar ---------- */
function Binturong() {
  return (
    <Svg w="80" h="43" stroke="none">
      <defs>
        <linearGradient id="fur" x1="0" y1="0" x2="0" y2="1"><stop offset="0" stopColor="#747a90" /><stop offset="1" stopColor="#5c6384" /></linearGradient>
        <linearGradient id="body" x1="0" y1="0" x2="1" y2="0"><stop offset="0" stopColor="#5a618a" /><stop offset=".6" stopColor="#b4b2cf" /><stop offset="1" stopColor="#d8d6e4" /></linearGradient>
      </defs>
      <path d="M20 43V36Q30 27 50 29Q72 27 78 43Z" fill="url(#body)" />
      <path d="M24 16Q12 12 8 5L14 7Q12 3 16 1Q26 1 31 8ZM55 16Q66 13 70 6L64 7Q66 4 62 2Q54 1 49 8Z" fill="#3f465c" />
      <path d="M21 12Q16 8 19 5Q25 6 28 10ZM58 12Q63 8 60 5Q54 6 51 10Z" fill="#e6c4b0" />
      <path d="M40 5Q55 5 60 17Q62 29 50 35Q45 42 40 42T30 35Q18 29 20 17Q25 5 40 5Z" fill="url(#fur)" />
      <path d="M32 31Q34 25 40 25T48 31Q49 39 40 41Q31 39 32 31Z" fill="#cdc6cf" />
      <path d="M26 18Q30 14 35 18M45 18Q50 14 54 18" stroke="#bf9c98" strokeWidth="1.500" fill="none" />
      <circle cx="31.500" cy="22" r="3" fill="#e8e3e6" /><circle cx="48.500" cy="22" r="3" fill="#e8e3e6" />
      <circle cx="32" cy="22" r="2.300" fill="#2b1a1a" /><circle cx="48" cy="22" r="2.300" fill="#2b1a1a" />
      <path d="M35.500 30.500Q35.500 27.500 40 27.500T44.500 30.500Q43.500 34 40 34T35.500 30.500Z" fill="#3f4667" />
      <path d="M36.500 37Q40 39 43.500 37" stroke="#8c6a70" fill="none" />
      <path d="M27 28L2 19M27 29L0 26M27 31L4 35M28 33L12 40M52 28L78 19M52 29L80 26M52 31L76 36" stroke="#dcc0b4" strokeWidth=".6" />
    </Svg>
  );
}

function Taskbar() {
  return (
    <div className="flex h-[51px] shrink-0 items-center border-t border-black bg-linear-to-r from-[#233842] via-[#29343a] to-[#1d2f38] text-white">
      <div className="flex w-[60px] justify-center"><Svg w="20" h="20" stroke="none"><path d="M0 3L8.5 1.5V9.500H0ZM9.500 1.300L20 0V9.500H9.500ZM0 10.500H8.500V18.500L0 17ZM9.500 10.500H20V20L9.500 18.700Z" fill="#fff" /></Svg></div>
      <div className="flex h-full w-[360px] items-center border-b border-[#b8b8b8] bg-[#f1f1f1] text-[#252423]">
        <Magnifier w={20} h={20} className="ml-[15px]" />
        <T w={164} className="ml-[15px] text-[18.5px]">Type here to search</T>
        <div className="ml-[58px] self-end"><Binturong /></div>
      </div>
      <div className="flex w-[60px] justify-center"><Svg w="21" h="20"><path d="M1 0V3.5H13V0M1 20V16.5H13V20M1 5.5H13V14.5H1ZM19 0V5M19 12V20" /><rect x="17.5" y="6.500" width="3" height="3" fill="#fff" stroke="none" /></Svg></div>
      <div className="ml-[7px] h-[26px] w-[3px] border-x border-[#5a6a71]" />
      <div className="ml-[13px] flex w-[62px] justify-center"><Svg w="16" h="30" stroke="none"><path d="M12 0V8L7 12L14 20L4 30V22L8 19L0 11Z" fill="#fff" /><path d="M12 0L14 8L7 12ZM4 30L1 22L8 19Z" fill="#c7cdd0" /></Svg></div>
      <div className="flex w-[62px] justify-center"><Svg w="28" h="24" stroke="none"><path d="M0 0H11L13 3H28V8H0Z" fill="#e19d00" /><rect y="4" x="0" width="28" height="19" fill="#ffd257" /><path d="M5 24V15Q5 12 8 12H20Q23 12 23 15V24H18V18H10V24Z" fill="#3a97e2" /><path d="M10 18H18V22H10Z" fill="#f5b92e" /></Svg></div>
      <div className="ml-[6px] flex h-full w-[51px] items-center justify-center border-b-[3px] border-[#76b9ed]">
        <Svg w="32" h="32" stroke="none" className="ml-[2px] mt-[3px]"><path d="M14 14L1.2 7.5A15 15 0 0 1 27 7.5Z" fill="#ea4335" /><path d="M14 15L1 7.5A15 15 0 0 0 14 30Z" fill="#1e9b4a" /><path d="M14 15L27.5 7.5A15 15 0 0 1 14 30Z" fill="#fbc116" /><circle cx="14" cy="15" r="7" fill="#fff" /><circle cx="14" cy="15" r="5.5" fill="#3b78e7" /><circle cx="21" cy="22" r="9" fill="#7b8f9a" /><text x="21" y="26.5" fontSize="12" textAnchor="middle" fill="#fff" fontWeight="600" fontFamily="Roboto, sans-serif">H</text></Svg>
      </div>
      <div className="ml-[11px] flex h-full w-[51px] items-center justify-center border-b-[3px] border-[#76b9ed] pr-[2px] pt-[1px]">
        <Svg w="30" h="30" stroke="#dfe6ea" strokeWidth="1.2"><path d="M8 1Q1 1 1 7Q1 14 6 20Q8 22 10 19L12 16Q14 18 13 21L15 28Q20 31 21 26L22 20Q28 21 29 18L25 18Q30 9 29 4Q26 0 19 2Q14 -1 8 1Z" fill="#336791" /><path d="M12 16Q8 12 10 5Q11 2 15 2Q19 3 19 8L18 14Q20 17 22 20M19 2Q24 6 22 18M11 19L6 22" /></Svg>
      </div>
      <div className="ml-[6px] flex h-full w-[61px] border-b-[3px] border-[#76b9ed] bg-[#47545a]">
        <div className="flex w-[56px] items-center justify-center border-r border-[#333f44] bg-[#566267] pl-[2px] pt-[1px]">
          <Svg w="24" h="30" stroke="none"><rect x="13" y="0" width="11" height="30" rx="1" fill="#d48a10" /><path d="M13 0H24V10H13Z" fill="#e8ae1a" /><path d="M6.5 8Q6.5 7 7.5 7H17V30H6.5Z" fill="#f0c53c" /><path d="M0 15H10.5V30H0Z" fill="#f8e07a" /></Svg>
        </div>
      </div>
      <Svg w="30" h="28" className="ml-[381px] mt-[2px]" stroke="none"><circle cx="13.5" cy="13.5" r="13.5" fill="#fff" /><circle cx="13.5" cy="13.5" r="11" fill="#0a97dc" /><text x="13.5" y="20.5" fontSize="20" textAnchor="middle" fill="#fff" fontWeight="700" fontFamily="Open Sans, sans-serif">?</text><circle cx="23.5" cy="20" r="6.3" fill="#f6b21b" /><text x="23.5" y="24.3" fontSize="11" textAnchor="middle" fill="#fff" fontWeight="700" fontFamily="Open Sans, sans-serif">i</text></Svg>
      <Svg w="20" h="28" className="ml-[80px]" stroke="none"><rect x="0" y="0" width="20" height="28" rx="3" fill="#1f5b8d" /><rect x="2.5" y="5" width="5" height="20" fill="#c8203a" /><path d="M3 9H7M3 13H7M3 17H7M3 21H7" stroke="#e8b8c0" /><circle cx="12.5" cy="9" r="1.8" fill="#fff" /><path d="M11 11L15 10L18 4L16.500 12L15 18L17 26H14.500L13 20L11 26H9L11 18Z" fill="#fff" /><rect x="4" y="2" width="10" height="1.5" fill="#8ab1d0" /></Svg>
      <T w={123} className="ml-[16px] text-[17px]">Round 4 results</T>
      <Svg w="17" h="10" className="ml-[30px]" strokeWidth="1.4"><path d="M1 9L8.5 1.5L16 9" /></Svg>
      <Svg w="16" h="16" className="ml-[15px]"><path d="M1 16Q1 1 16 1M5 16Q5 5 16 5M9 16Q9 9 16 9" stroke="#dfe4e6" /><circle cx="14" cy="14" r="1.5" fill="#fff" stroke="none" /></Svg>
      <Svg w="15" h="18" className="ml-[14px]"><rect x="1" y="4" width="9" height="10" rx="2" /><path d="M10 7L14 5V13L10 11M3 1.5Q5.5 .5 8 1.5M3 16.5Q5.5 17.5 8 16.5" /></Svg>
      <Svg w="22" h="20" className="ml-[11px]"><path d="M9 18L1 16V4L20 1V10M6 3.5V16" /><path d="M8 9Q10 6 13 8M13 5V8H10M13 11Q10 14 8 11" /><circle cx="16" cy="15" r="5" fill="#2f74c8" stroke="none" /></Svg>
      <Svg w="21" h="16" className="ml-[7px]"><rect x="5" y="5" width="14" height="9" /><rect x="7" y="7" width="11" height="6" fill="#fff" stroke="none" /><path d="M20.3 8V12M1 1V3Q1 5 3 5T5 3V1M3 5V8" strokeWidth="1.6" /></Svg>
      <Svg w="21" h="18" className="ml-[10px]"><path d="M1 6.5H4L8 2.5V15.5L4 11.5H1ZM11 6Q13 9 11 12M14 4Q17.5 9 14 14M17 1.5Q22 9 17 16.5" /></Svg>
      <T w={29} className="ml-[13px] text-[15px]">ENG</T>
      <div className="ml-[13px] flex w-[82px] flex-col items-center text-[14px] leading-[23px]"><T w={35}>12:49</T><T w={76}>10-06-2024</T></div>
      <Svg w="21" h="20" className="ml-[19px]"><path d="M1 1H20V15.5H13.5L10.5 19L7.5 15.5H1Z" /></Svg>
      <Svg w="26" h="27" className="ml-[25px]" stroke="none">
        <defs><linearGradient id="cp1" x1="0" y1="0" x2="0" y2="1"><stop offset="0" stopColor="#2aa9f5" /><stop offset=".5" stopColor="#1f7fd6" /><stop offset="1" stopColor="#9ad13c" /></linearGradient><linearGradient id="cp2" x1="0" y1="0" x2="0" y2="1"><stop offset="0" stopColor="#b06cf0" /><stop offset="1" stopColor="#f0668c" /></linearGradient></defs>
        <path d="M7 1H16Q19 2 18 7Q14 7 13 12L11 18H3Q-1 17 1 12L4 4Q5 1 7 1Z" fill="url(#cp1)" /><path d="M19 8H22Q26 9 25 13L23 20H12L15 11Q16 8 19 8Z" fill="url(#cp2)" /><rect x="7" y="17" width="19" height="9.5" rx="2" fill="#fcc419" /><text x="16.5" y="24.8" fontSize="8.5" fontWeight="700" textAnchor="middle" fill="#201f1e" fontFamily="Open Sans, sans-serif">PRE</text>
      </Svg>
      <div className="ml-auto mr-[5px] h-full w-px bg-[#6f7b81]" />
    </div>
  );
}

export default function App() {
  return (
    <div className="flex h-[1080px] w-[1920px] flex-col overflow-hidden bg-[#f3f2f1] font-['Open_Sans',sans-serif]">
      <TitleBar />
      <Tabs />
      <Ribbon />
      <div className="flex h-[800px] shrink-0">
        <Nav />
        <Canvas />
        <Filters />
        <Build />
        <Data />
        <Rail />
      </div>
      <StatusBar />
      <Taskbar />
    </div>
  );
}
